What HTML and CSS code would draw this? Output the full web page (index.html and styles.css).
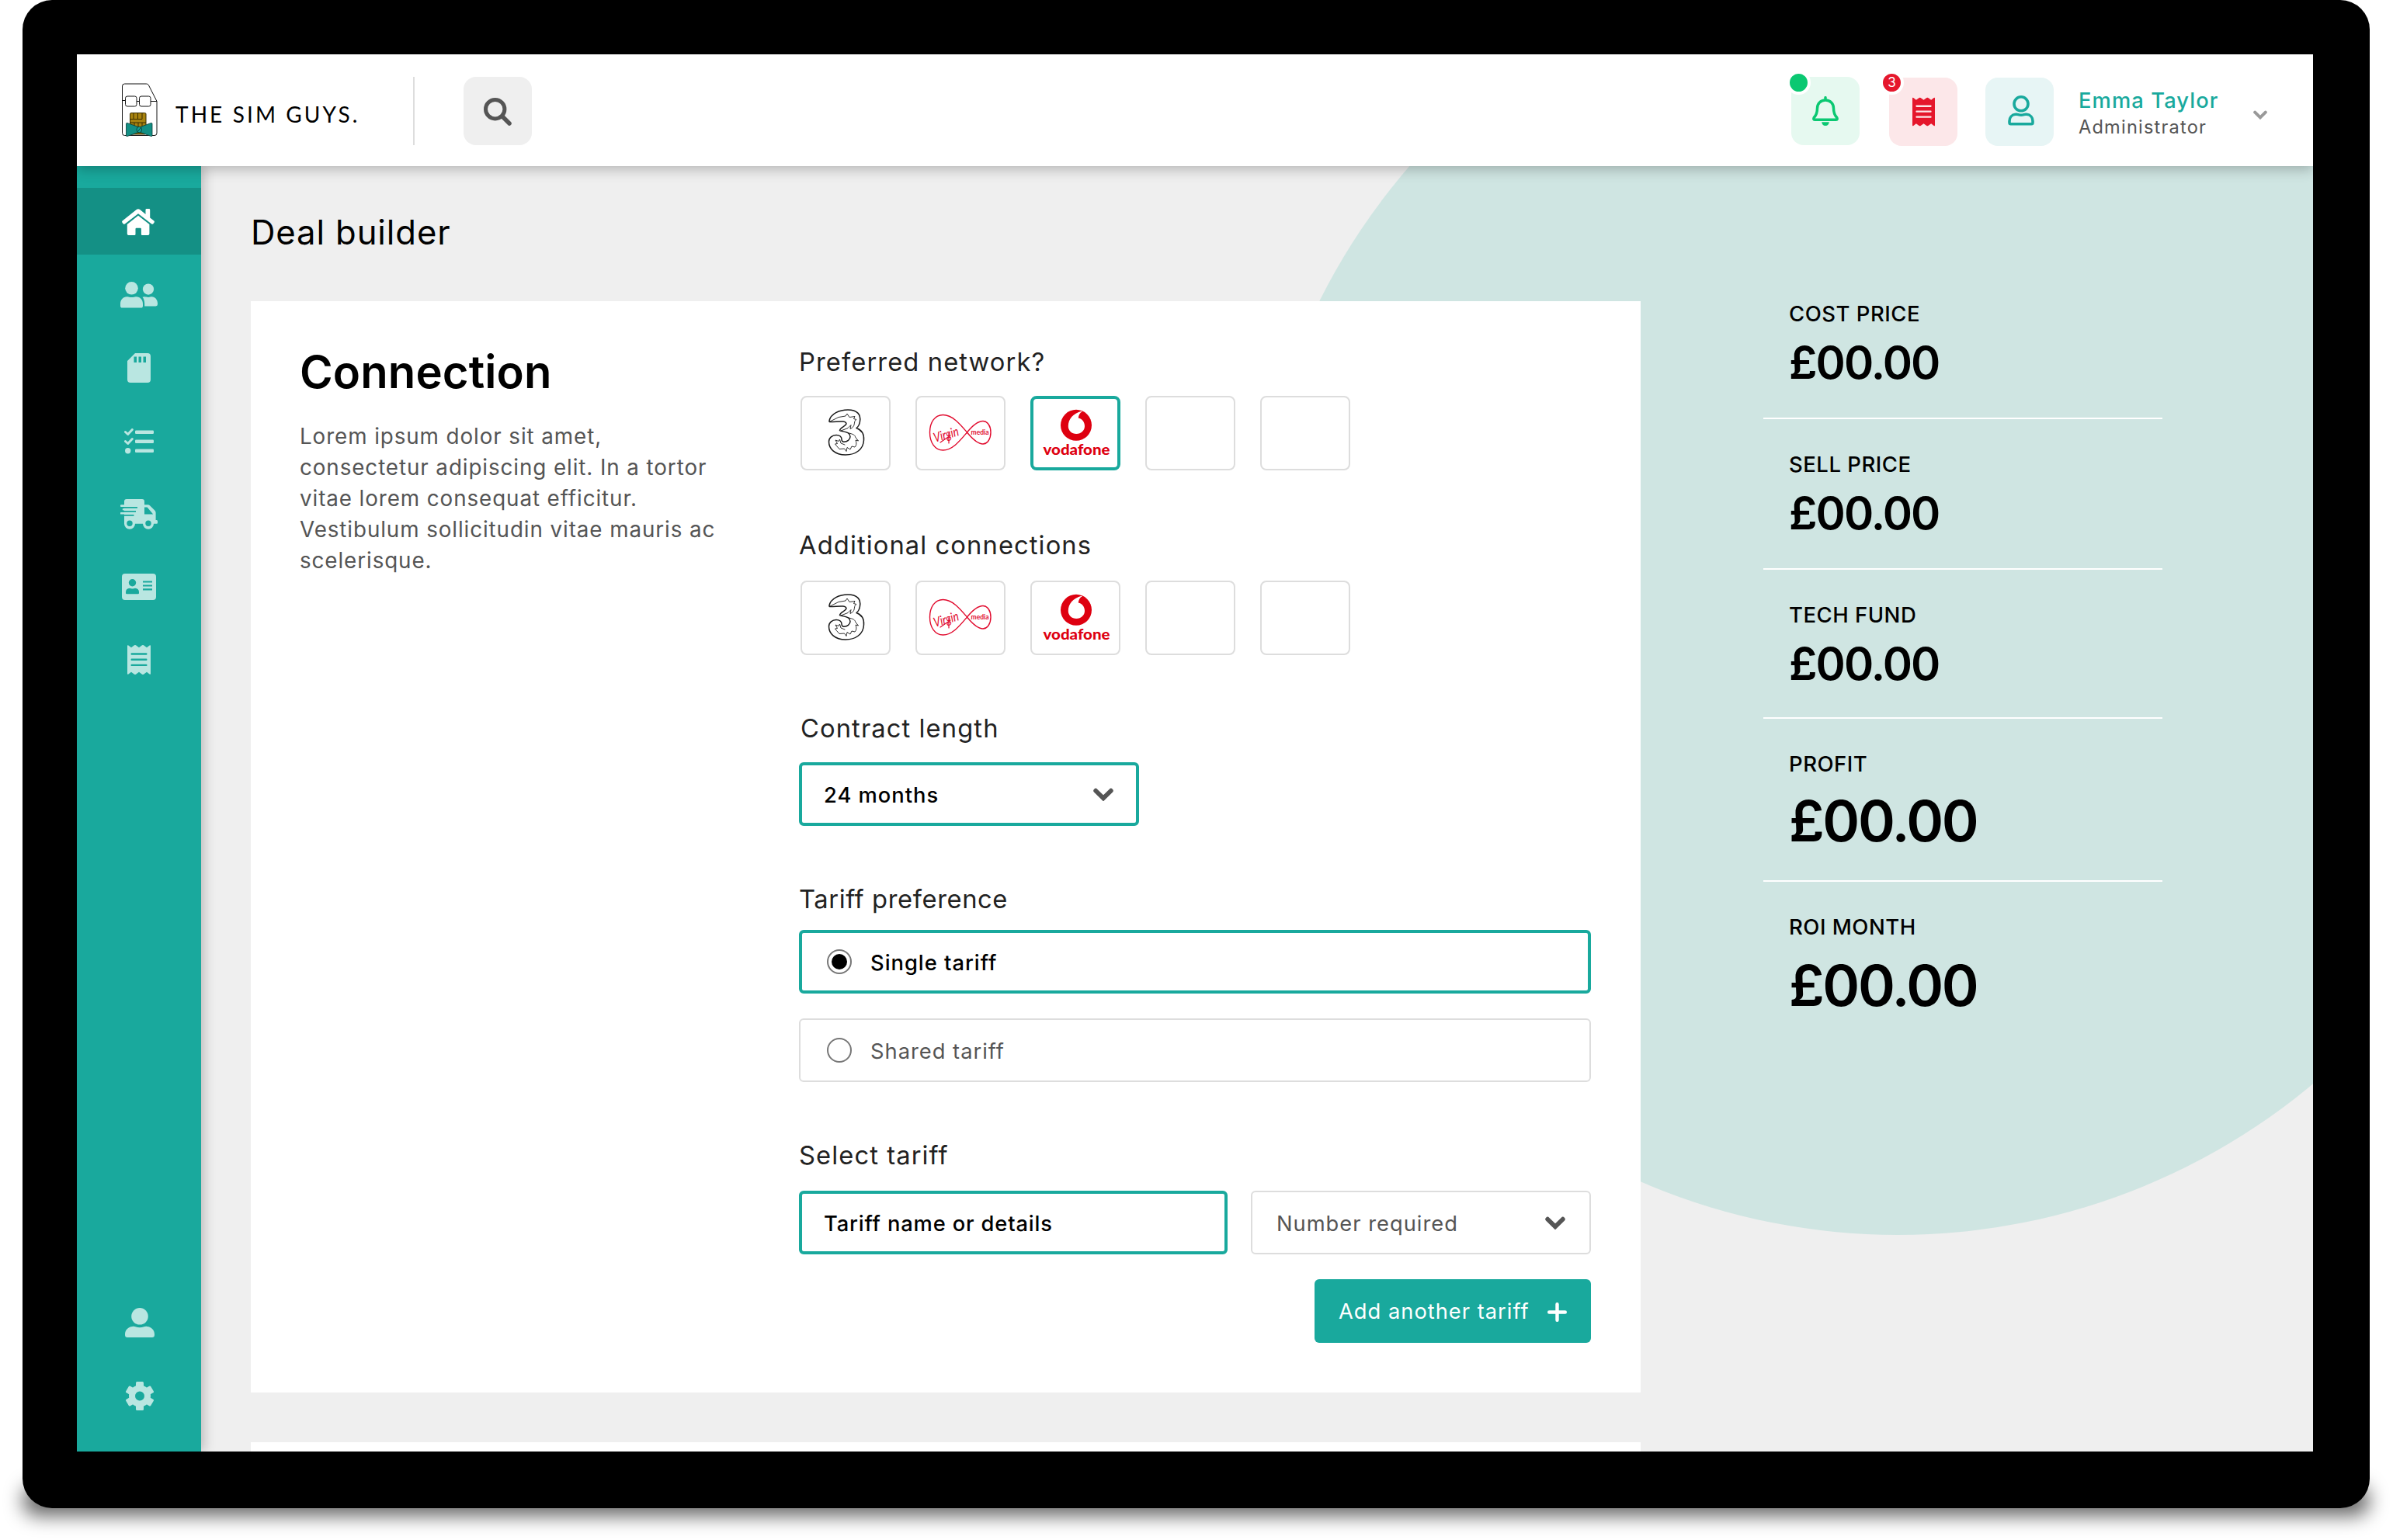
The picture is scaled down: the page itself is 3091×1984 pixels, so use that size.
FILE: index.html
```html
<!DOCTYPE html>
<html lang="en">
<head>
<meta charset="UTF-8">
<title>The Sim Guys - Deal builder</title>
<link rel="stylesheet" href="styles.css">
</head>

<body>
    <!-- shared icons -->
    <svg class="sprite" width="0" height="0">
        <symbol id="icon-home" viewBox="0 0 42 34">
            <path d="M30.5 1.2Q30.5 0 31.7 0H35Q36.2 0 36.2 1.2V11.5L41.3 15.6Q42.4 16.6 41.5 17.8L40.4 19.2Q39.4 20.3 38.2 19.4L21 6.2 3.8 19.4Q2.6 20.3 1.6 19.2L.5 17.8Q-.4 16.6.7 15.6L18.8 1.1Q21 -.7 23.2 1.1L30.5 7Z"/>
            <path d="M21 8.7L35.4 20V32.2Q35.4 34 33.6 34H26Q24.9 34 24.9 32.8V26Q24.9 24.8 23.8 24.8H18.6Q17.5 24.8 17.5 26V32.8Q17.5 34 16.3 34H8.6Q6.8 34 6.8 32.2V20Z"/>
        </symbol>
        <symbol id="icon-users" viewBox="0 0 48 34">
            <circle cx="14.5" cy="8.3" r="8.3"/>
            <path d="M8.5 19.2C11 19 11.5 20 14.5 20S18 19 20.5 19.2C25.5 19.4 29 23 29 28.500V31Q29 33.600 26.400 33.600H2.600Q0 33.600 0 31V28.500C0 23 3.500 19.400 8.500 19.200Z"/>
            <circle cx="36" cy="9.600" r="7.100"/>
            <path d="M28.500 19.800C30.500 18.800 32.500 19.200 33.500 19.600 35 20.200 37 20.200 38.500 19.600 43.500 18 48 22.500 48 28V29Q48 31.400 45.600 31.400H31.200C31.400 27 31 22.500 28.500 19.800Z"/>
        </symbol>
        <symbol id="icon-sd" viewBox="0 0 30 38">
            <path fill-rule="evenodd" d="M10 0H26Q30 0 30 4V34Q30 38 26 38H4Q0 38 0 34V10ZM8.500 4.500V12H12V4.500ZM14.500 4.500V12H18V4.500ZM20.500 4.500V12H24V4.500Z"/>
        </symbol>
        <symbol id="icon-tasks" viewBox="0 0 38 33">
            <path d="M1.500 4.500L4.700 7.500 10.300 1.500M1.500 16.500L4.700 19.500 10.300 13.500" fill="none" stroke="currentColor" stroke-width="3" stroke-linecap="round" stroke-linejoin="round"/>
            <circle cx="4.700" cy="28.700" r="3.700"/>
            <rect x="14" y="2.500" width="24" height="4.600" rx="1.300"/>
            <rect x="14" y="14.500" width="24" height="4.600" rx="1.300"/>
            <rect x="14" y="26.500" width="24" height="4.600" rx="1.300"/>
        </symbol>
        <symbol id="icon-truck" viewBox="0 0 48 39">
            <path fill-rule="evenodd" d="M8 0H28Q31 0 31 3V7.200H35.500Q37 7.200 38.200 8.400L44 14.200Q45.600 15.600 45.600 17.500V27H46.800Q48 27 48 28.500V30.500Q48 31.800 46.800 31.800H43A7 7 0 1 1 29 31.800H19A7 7 0 1 1 5 31.800V3Q5 0 8 0ZM31 10.500V19.500H42.200L34.600 10.500ZM12 27.600A3.700 3.700 0 1 0 12 35A3.700 3.700 0 1 0 12 27.600ZM36 27.600A3.700 3.700 0 1 0 36 35A3.700 3.700 0 1 0 36 27.600Z"/>
            <path class="truck-gap" d="M5 10.800H22M4 15.800H20M5 20.800H17.500" fill="none" stroke-width="1.800"/>
            <path d="M1 8.600H12M4 13.300H14M1 18.200H12" fill="none" stroke="currentColor" stroke-width="2.600" stroke-linecap="round"/>
        </symbol>
        <symbol id="icon-id" viewBox="0 0 44 34">
            <path fill-rule="evenodd" d="M4 0H40Q44 0 44 4V30Q44 34 40 34H4Q0 34 0 30V4Q0 0 4 0ZM13.500 7A4.700 4.700 0 1 0 13.500 16.400A4.700 4.700 0 1 0 13.500 7ZM10 18.800Q5 19.200 5 24V25Q5 26.200 6.200 26.200H20.800Q22 26.200 22 25V24Q22 19.200 17 18.800Q13.500 20.200 10 18.800ZM27 9.500V11.600H39V9.500ZM27 14.400V16.500H39V14.400ZM27 19.300V21.400H39V19.300Z"/>
        </symbol>
        <symbol id="icon-receipt" viewBox="0 0 30 38">
            <path fill-rule="evenodd" d="M0 1.200Q0 -.3 1.400 .5L5 3.300 9 .3Q10 -.3 11 .3L15 3.300 19 .3Q20 -.3 21 .3L25 3.300 28.600 .5Q30 -.3 30 1.200V36.800Q30 38.300 28.600 37.500L25 34.700 21 37.700Q20 38.300 19 37.700L15 34.700 11 37.700Q10 38.300 9 37.700L5 34.700 1.400 37.500Q0 38.300 0 36.800ZM5.500 10.300Q4.500 10.300 4.500 11.500T5.500 12.700H24.500Q25.500 12.700 25.500 11.500T24.500 10.300ZM5.500 17.500Q4.500 17.500 4.500 18.700T5.500 19.900H24.500Q25.500 19.900 25.500 18.700T24.500 17.500ZM5.500 24.700Q4.500 24.700 4.500 25.900T5.500 27.100H24.500Q25.500 27.100 25.500 25.900T24.500 24.700Z"/>
        </symbol>
        <symbol id="icon-user" viewBox="0 0 38 38">
            <circle cx="19" cy="10.800" r="10.800"/>
            <path d="M9.500 23.900C13 23.400 14.500 25.200 19 25.200S25 23.400 28.500 23.900C34 24.300 38 28.500 38 34V34.800Q38 38 34.800 38H3.200Q0 38 0 34.800V34C0 28.500 4 24.300 9.500 23.900Z"/>
        </symbol>
        <symbol id="icon-cog" viewBox="0 0 36 37">
            <circle cx="18" cy="18.500" r="10" fill="none" stroke="currentColor" stroke-width="8"/>
            <g>
                <rect x="13" y="0" width="10" height="9" rx="1.500"/>
                <rect x="13" y="0" width="10" height="9" rx="1.500" transform="rotate(60 18 18.500)"/>
                <rect x="13" y="0" width="10" height="9" rx="1.500" transform="rotate(120 18 18.500)"/>
                <rect x="13" y="0" width="10" height="9" rx="1.500" transform="rotate(180 18 18.500)"/>
                <rect x="13" y="0" width="10" height="9" rx="1.500" transform="rotate(240 18 18.500)"/>
                <rect x="13" y="0" width="10" height="9" rx="1.500" transform="rotate(300 18 18.500)"/>
            </g>
        </symbol>
        <symbol id="icon-chevron" viewBox="0 0 26 17">
            <path d="M3.200 3.700L13 13.300 22.800 3.700" fill="none" stroke="currentColor" stroke-width="5.800" stroke-linecap="round"/>
        </symbol>

        <!-- network logos, drawn on the 116x96 tile -->
        <symbol id="logo-three" viewBox="0 0 116 96">
            <g fill="none" stroke="#1a1a1a" stroke-linecap="round" stroke-linejoin="round">
                <path stroke-width="1.500" d="M37 32C39 23 50 18 61 18C73 18 78 24 76.500 33C76 37 74.500 39.500 72 41.500C79 44 82 50 81.500 57C81 69 71 76 58 76C44 76 36.500 68 36.500 59C36.500 54 41 50.500 46 50.500C50.500 50.500 53 53 53 56C53 57.500 54 59.500 56 59.300C60 59 64 56.500 64 52.500C64 46.500 57 46.800 50.500 44.500C51 40.500 58 39.500 59 36C58.500 31 48 33.500 38.500 33.500Q36.500 33.500 37 32Z"/>
                <path stroke-width=".9" d="M38 33L49 27.500 58 26 60 23 63 27.500 70 26.500 68.500 29.500 72 30.500C68 32 71 38 66.500 41L64 42.500 65 37.500 61 41.500 52 45M62 48C68 49 70.500 51 70.500 53L74.500 58 71 57C72.500 61 72 64 70 66L66 65 64 69 60 66.500 59 71.500 56.500 68 50 68.500 46.500 64.500 44.500 62 47.500 61.500 45 57 49 58.500 50.500 56 52 61 57 63"/>
            </g>
        </symbol>
        <symbol id="logo-virgin" viewBox="0 0 116 96">
            <path d="M66.500 47C58 57 48 70 35.500 70C25 70 18.500 60 18.500 47S25 24.500 35.500 24.500C48 24.500 58 37 66.500 47C73 55 80 62 87 62C93 62 97 55 97 47S93 32.500 87 32.500C80 32.500 73 39 66.500 47Z" fill="none" stroke="#e10a2d" stroke-width="1.400"/>
            <path d="M32 60L45 51M43 48V61" fill="none" stroke="#e10a2d" stroke-width="1.200" stroke-linecap="round"/>
        </symbol>
        <symbol id="logo-vodafone" viewBox="0 0 116 96">
            <circle cx="59" cy="37.800" r="20" fill="#de0010"/>
            <path d="M66 19.800C55 22.500 48.800 30 48.800 39C48.800 45 53.500 49 59.300 49C65.500 49 70 44.500 70 39C70 33.500 66.500 29.500 61.800 28.500C62 25 64 21.500 66.800 20.200Z" fill="#fff"/>
        </symbol>
    </svg>

    <div class="device">
        <div class="screen">
            <header class="topbar">
                <div class="brand">
                    <svg width="46" height="70" viewBox="0 0 46 70">
                        <g fill="none" stroke="#111" stroke-width="1">
                            <path d="M3.500 1H31.500Q33.500 1 34.300 2.500L45 23.500V64.500Q45 67.500 42 67.500H3.500Q.5 67.500 .5 64.500V4Q.5 1 3.500 1Z"/>
                            <path d="M.5 22.500H4.500M19 23.500H22.500M37 23.500H45"/>
                            <rect x="4.500" y="17" width="14.500" height="13" rx="2.500"/>
                            <rect x="22.500" y="17" width="14.500" height="13" rx="2.500"/>
                        </g>
                        <rect x="10.500" y="38.500" width="20.500" height="27.500" rx="1.500" fill="#a8830f" stroke="#3a2d00"/>
                        <path d="M10.500 46.500H26M10.500 51H31M15 39V46M20.500 39V46M26 39V46.500M16 51V57M21 51V57M26 51V57M14 64H28" fill="none" stroke="#3a2d00"/>
                        <path d="M5.500 52.500Q5.500 51 7 51.500L22.500 57 37.500 51.500Q39 51 39 52.500V67.500Q39 69 37.500 68.500L22.500 63 7 68.500Q5.500 69 5.500 67.500Z" fill="#138f84" stroke="#0a3b37" stroke-width=".8"/>
                        <ellipse cx="22.300" cy="60" rx="3.300" ry="3.800" fill="#15a094" stroke="#062e2b" stroke-width=".8"/>
                        <path d="M20.500 62.500L24.300 57.500" stroke="#062e2b" stroke-width=".8"/>
                    </svg>
                    <span class="brand-name">THE SIM GUYS.</span>
                </div>
                <div class="divider"></div>
                <button class="search-button" type="button">
                    <svg width="36" height="36" viewBox="0 0 36 36">
                        <circle cx="14.700" cy="14.700" r="12.200" fill="none" stroke="#555" stroke-width="5"/>
                        <path d="M24.500 24.500L33 33" stroke="#555" stroke-width="5.500" stroke-linecap="round"/>
                    </svg>
                </button>

                <div class="actions">
                    <div class="action action-alerts">
                        <svg width="34" height="38" viewBox="0 0 34 38">
                            <path d="M17 1.700V5M17 5C10.500 5 6.500 9.800 6.500 15.500C6.500 22 5 24.500 2.300 27.500Q1 30.200 3.200 30.200H30.800Q33 30.200 31.700 27.500C29 24.500 27.500 22 27.500 15.500C27.500 9.800 23.500 5 17 5Z" fill="none" stroke="#0bc872" stroke-width="3.500" stroke-linecap="round" stroke-linejoin="round"/>
                            <path d="M12.200 33.300H21.800Q21.300 38 17 38T12.200 33.300Z" fill="#0bc872"/>
                        </svg>
                        <span class="badge badge-green"></span>
                    </div>
                    <div class="action action-orders">
                        <svg width="29" height="38"><use href="#icon-receipt"/></svg>
                        <span class="badge badge-red">3</span>
                    </div>
                    <div class="action action-account">
                        <svg width="34" height="39" viewBox="0 0 34 39" stroke="#19a99d" stroke-width="3.600">
                            <circle cx="17" cy="10.800" r="9"/>
                            <path d="M10 24.300C12.500 23.800 13.500 25.300 17 25.300S21.500 23.800 24 24.300C29 24.700 32 28.500 32 33V35Q32 36.700 30.300 36.700H3.700Q2 36.700 2 35V33C2 28.500 5 24.700 10 24.300Z" stroke-linejoin="round"/>
                        </svg>
                    </div>
                    <div class="account">
                        <div class="account-name">Emma Taylor</div>
                        <div class="account-role">Administrator</div>
                    </div>
                    <svg class="account-toggle" width="18" height="12"><use href="#icon-chevron"/></svg>
                </div>
            </header>

            <div class="layout">
                <nav class="sidebar">
                    <a class="nav-item active"><svg width="42" height="34"><use href="#icon-home"/></svg></a>
                    <a class="nav-item"><svg width="48" height="34"><use href="#icon-users"/></svg></a>
                    <a class="nav-item"><svg width="30" height="38"><use href="#icon-sd"/></svg></a>
                    <a class="nav-item"><svg width="38" height="33"><use href="#icon-tasks"/></svg></a>
                    <a class="nav-item"><svg width="48" height="39"><use href="#icon-truck"/></svg></a>
                    <a class="nav-item"><svg width="44" height="34"><use href="#icon-id"/></svg></a>
                    <a class="nav-item"><svg width="30" height="38"><use href="#icon-receipt"/></svg></a>
                    <a class="nav-item nav-bottom"><svg width="38" height="38"><use href="#icon-user"/></svg></a>
                    <a class="nav-item nav-settings"><svg width="36" height="37"><use href="#icon-cog"/></svg></a>
                </nav>

                <main class="main">
                    <h1>Deal builder</h1>
                    <div class="columns">
                        <div class="cards">
                            <section class="card">
                                <div class="intro">
                                    <h2>Connection</h2>
                                    <p>Lorem ipsum dolor sit amet,<br>
                                    consectetur adipiscing elit. In a tortor<br>
                                    vitae lorem consequat efficitur.<br>
                                    Vestibulum sollicitudin vitae mauris ac<br>
                                    scelerisque.</p>
                                </div>

                                <form class="fields">
                                    <div class="group preferred">
                                        <h3>Preferred network?</h3>
                                        <div class="networks">
                                            <div class="network"><svg width="116" height="96"><use href="#logo-three"/></svg></div>
                                            <div class="network">
                                                <svg width="116" height="96">
                                                    <use href="#logo-virgin"/>
                                                    <text class="virgin-script" x="23" y="56" textLength="33" lengthAdjust="spacingAndGlyphs" transform="rotate(-16 38 50)">Virgin</text>
                                                    <text class="virgin-media" x="71.500" y="49.500" textLength="23" lengthAdjust="spacingAndGlyphs">media</text>
                                                </svg>
                                            </div>
                                            <div class="network selected">
                                                <svg width="116" height="96">
                                                    <use href="#logo-vodafone"/>
                                                    <text class="vodafone-name" x="16.500" y="75.500" textLength="86" lengthAdjust="spacingAndGlyphs">vodafone</text>
                                                </svg>
                                            </div>
                                            <div class="network"></div>
                                            <div class="network"></div>
                                        </div>
                                    </div>

                                    <div class="group additional">
                                        <h3>Additional connections</h3>
                                        <div class="networks">
                                            <div class="network"><svg width="116" height="96"><use href="#logo-three"/></svg></div>
                                            <div class="network">
                                                <svg width="116" height="96">
                                                    <use href="#logo-virgin"/>
                                                    <text class="virgin-script" x="23" y="56" textLength="33" lengthAdjust="spacingAndGlyphs" transform="rotate(-16 38 50)">Virgin</text>
                                                    <text class="virgin-media" x="71.500" y="49.500" textLength="23" lengthAdjust="spacingAndGlyphs">media</text>
                                                </svg>
                                            </div>
                                            <div class="network">
                                                <svg width="116" height="96">
                                                    <use href="#logo-vodafone"/>
                                                    <text class="vodafone-name" x="16.500" y="75.500" textLength="86" lengthAdjust="spacingAndGlyphs">vodafone</text>
                                                </svg>
                                            </div>
                                            <div class="network"></div>
                                            <div class="network"></div>
                                        </div>
                                    </div>

                                    <div class="group contract">
                                        <h3>Contract length</h3>
                                        <div class="field select selected">
                                            <span>24 months</span>
                                            <svg width="26" height="17"><use href="#icon-chevron"/></svg>
                                        </div>
                                    </div>

                                    <div class="group preference">
                                        <h3>Tariff preference</h3>
                                        <div class="field option selected">
                                            <i class="radio checked"></i>
                                            <span>Single tariff</span>
                                        </div>
                                        <div class="field option">
                                            <i class="radio"></i>
                                            <span>Shared tariff</span>
                                        </div>
                                    </div>

                                    <div class="group tariff">
                                        <h3>Select tariff</h3>
                                        <div class="field-row">
                                            <div class="field tariff-name selected"><span>Tariff name or details</span></div>
                                            <div class="field select">
                                                <span>Number required</span>
                                                <svg width="26" height="17"><use href="#icon-chevron"/></svg>
                                            </div>
                                        </div>
                                        <button class="add-button" type="button">
                                            <span>Add another tariff</span>
                                            <svg width="25" height="25" viewBox="0 0 25 25"><path d="M12.500 2.200V22.800M2.200 12.500H22.800" stroke="#fff" stroke-width="4.400" stroke-linecap="round"/></svg>
                                        </button>
                                    </div>
                                </form>
                            </section>
                            <section class="card next-card"></section>
                        </div>

                        <aside class="summary">
                            <div class="summary-item">
                                <div class="summary-label">COST PRICE</div>
                                <div class="summary-value">£00.00</div>
                            </div>
                            <div class="summary-item">
                                <div class="summary-label">SELL PRICE</div>
                                <div class="summary-value">£00.00</div>
                            </div>
                            <div class="summary-item tech">
                                <div class="summary-label">TECH FUND</div>
                                <div class="summary-value">£00.00</div>
                            </div>
                            <div class="summary-item large">
                                <div class="summary-label">PROFIT</div>
                                <div class="summary-value">£00.00</div>
                            </div>
                            <div class="summary-item large">
                                <div class="summary-label">ROI MONTH</div>
                                <div class="summary-value">£00.00</div>
                            </div>
                        </aside>
                    </div>
                </main>
            </div>
        </div>
    </div>
</body>
</html>
```
FILE: styles.css
```css
* {
    box-sizing: border-box;
}

body {
    margin: 0;
    height: 1984px;
    background: #fff;
    font-family: Inter, "Open Sans", sans-serif;
    overflow: hidden;
}

svg {
    display: block;
    flex-shrink: 0;
    fill: currentColor;
}

h1, h2, h3, p {
    margin: 0;
    white-space: nowrap;
}

button {
    border: none;
    padding: 0;
    font-family: inherit;
}

.sprite {
    position: absolute;
}

/* Tablet frame */
.device {
    position: relative;
    width: 3023px;
    height: 1943px;
    margin-left: 29px;
    padding: 70px 73px 73px 70px;
    background: #000;
    border-radius: 38px;
}

.device::before {
    content: "";
    position: absolute;
    z-index: -1;
    left: 0;
    right: 0;
    bottom: -10px;
    height: 40px;
    border-radius: 20px;
    background: rgba(0, 0, 0, 0.6);
    filter: blur(12px);
}

.screen {
    width: 2880px;
    height: 1800px;
    overflow: hidden;
    background: #efefef;
}

/* Top bar */
.topbar {
    position: relative;
    z-index: 3;
    display: flex;
    align-items: center;
    height: 144px;
    padding: 0 59px 0 58px;
    background: #fff;
    box-shadow: 0 4px 16px rgba(0, 0, 0, 0.25);
}

.brand {
    display: flex;
    align-items: center;
    width: 375px;
}

.brand-name {
    margin: 9px 0 0 23px;
    font-family: Lato, sans-serif;
    font-size: 28px;
    line-height: 34px;
    letter-spacing: 3.1px;
    white-space: nowrap;
}

.divider {
    width: 2px;
    height: 88px;
    margin: 2px 63px 0 0;
    background: #ddd;
}

.search-button {
    display: flex;
    align-items: center;
    justify-content: center;
    width: 88px;
    height: 88px;
    margin-top: 2px;
    padding-top: 2px;
    border-radius: 16px;
    background: #efefef;
}

.actions {
    display: flex;
    align-items: flex-start;
    height: 144px;
    margin-left: auto;
}

.action {
    position: relative;
    display: flex;
    align-items: center;
    justify-content: center;
    width: 88px;
    height: 88px;
    margin-top: 30px;
    border-radius: 16px;
}

.action-alerts {
    margin-top: 29px;
    margin-right: 38px;
    background: #e6f9f0;
}

.action-orders {
    margin-right: 36px;
    background: #fce7e9;
    color: #e5172c;
}

.action-account {
    margin-right: 32px;
    padding: 0 0 4px 4px;
    background: #e7f5f5;
}

.action-account svg {
    fill: none;
}

.badge {
    position: absolute;
    display: flex;
    align-items: center;
    justify-content: center;
    width: 31px;
    height: 31px;
    border: 4px solid #fff;
    border-radius: 50%;
    color: #fff;
    font-size: 17px;
    line-height: 1;
}

.badge-green {
    top: -8px;
    left: -6px;
    background: #0bc872;
}

.badge-red {
    top: -9px;
    left: -12px;
    background: #e5172c;
}

.account {
    width: 225px;
    padding-top: 42px;
    white-space: nowrap;
}

.account-name {
    font-size: 27.3px;
    line-height: 35px;
    font-weight: 500;
    letter-spacing: 1.1px;
    color: #19a99d;
}

.account-role {
    font-size: 23.6px;
    line-height: 34px;
    letter-spacing: 1.2px;
    color: #555;
}

.account-toggle {
    margin-top: 72px;
    color: #999;
}

/* Sidebar */
.layout {
    display: flex;
    height: 1656px;
}

.sidebar {
    position: relative;
    z-index: 2;
    display: flex;
    flex-direction: column;
    gap: 8px;
    width: 160px;
    padding: 28px 0 29px;
    background: #19a99d;
    box-shadow: 4px 0 14px rgba(0, 0, 0, 0.22);
}

.nav-item {
    display: flex;
    align-items: center;
    justify-content: center;
    height: 86px;
    padding-top: 2px;
    color: #b9e6e1;
}

.nav-item.active {
    padding-right: 2px;
    background: #149085;
    color: #fff;
}

.nav-bottom {
    margin-top: auto;
}

.nav-bottom,
.nav-settings {
    padding: 0 0 0 2px;
}

.truck-gap {
    stroke: #19a99d;
}

/* Main area */
.main {
    position: relative;
    z-index: 0;
    flex: 1;
    padding: 61px 0 0 64px;
    overflow: hidden;
}

.main::before {
    content: "";
    position: absolute;
    z-index: -1;
    left: 1353px;
    top: -287px;
    width: 1664px;
    height: 1664px;
    border-radius: 50%;
    background: #cfe5e2;
}

h1 {
    margin-bottom: 63px;
    font-size: 43.6px;
    line-height: 50px;
    font-weight: 400;
    letter-spacing: 0.9px;
}

.columns {
    display: flex;
    align-items: flex-start;
}

.cards {
    display: flex;
    flex-direction: column;
    gap: 64px;
    width: 1790px;
}

.card {
    display: flex;
    height: 1406px;
    padding: 56px 64px 0 63px;
    background: #fff;
}

.next-card {
    height: 100px;
}

.intro {
    width: 643px;
}

.intro h2 {
    margin-bottom: 28px;
    font-size: 58px;
    line-height: 70px;
    font-weight: 600;
    letter-spacing: 0.1px;
}

.intro p {
    font-size: 27.8px;
    line-height: 40px;
    letter-spacing: 0.9px;
    color: #555;
}

/* Form */
.fields {
    width: 1020px;
    padding-top: 2px;
}

.group {
    margin-bottom: 74px;
}

.preferred {
    margin-bottom: 76px;
}

.group h3 {
    margin-bottom: 24px;
    font-size: 32.7px;
    line-height: 40px;
    font-weight: 400;
    letter-spacing: 1.1px;
    color: #222;
}

.additional h3,
.tariff h3 {
    margin-bottom: 26px;
}

.contract h3 {
    padding-left: 2px;
}

.preference h3 {
    margin-bottom: 20px;
    letter-spacing: 0.6px;
}

.networks {
    display: flex;
    gap: 32px;
    padding-left: 2px;
}

.network {
    display: flex;
    align-items: center;
    justify-content: center;
    width: 116px;
    height: 96px;
    border: 2px solid #ddd;
    border-radius: 8px;
}

.network.selected {
    border: 4px solid #19a99d;
}

.virgin-script {
    font-family: Lato, sans-serif;
    font-size: 17px;
    font-style: italic;
    fill: #e10a2d;
}

.virgin-media {
    font-family: Lato, sans-serif;
    font-size: 9px;
    font-weight: 700;
    fill: #e10a2d;
}

.vodafone-name {
    font-family: Lato, sans-serif;
    font-size: 19px;
    font-weight: 900;
    fill: #de0010;
}

.field {
    display: flex;
    align-items: center;
    height: 82px;
    padding: 3px 31px 0 31px;
    border: 2px solid #ddd;
    border-radius: 6px;
    font-size: 27.3px;
    line-height: 40px;
    letter-spacing: 1px;
    color: #555;
    white-space: nowrap;
}

.field.selected {
    padding: 3px 29px 0 28px;
    border: 4px solid #19a99d;
}

.field.selected span {
    font-weight: 500;
    color: #000;
}

.select {
    justify-content: space-between;
    width: 438px;
}

.select svg {
    margin-top: -3px;
}

.option,
.option.selected {
    padding-top: 0;
}

.option {
    padding-left: 34px;
}

.option.selected {
    padding-left: 32px;
}

.option + .option {
    margin-top: 32px;
}

.option span {
    padding-top: 3px;
}

.radio {
    width: 32px;
    height: 32px;
    margin-right: 24px;
    padding: 4px;
    border: 2px solid #777;
    border-radius: 50%;
}

.radio.checked {
    background: #000 content-box;
}

.field-row {
    display: flex;
    gap: 30px;
    margin-bottom: 32px;
}

.tariff-name {
    width: 552px;
    letter-spacing: 0.85px;
}

.add-button {
    display: flex;
    align-items: center;
    justify-content: space-between;
    width: 356px;
    height: 82px;
    margin-left: auto;
    padding: 2px 31px 0 31px;
    border-radius: 6px;
    background: #19a99d;
    font-size: 27.3px;
    line-height: 40px;
    letter-spacing: 1px;
    color: #fff;
    white-space: nowrap;
}

/* Deal totals */
.summary {
    width: 514px;
    margin: -42px 0 0 158px;
}

.summary-item {
    padding: 41px 0 36px 33px;
    border-bottom: 2px solid #fff;
}

.summary-item.tech {
    padding-bottom: 34px;
}

.summary-item.large {
    padding-bottom: 31px;
}

.summary-item:last-child {
    border-bottom: none;
}

.summary-label {
    margin-bottom: 11px;
    font-size: 27.5px;
    line-height: 34px;
    font-weight: 500;
    letter-spacing: 0.5px;
}

.summary-value {
    font-size: 58px;
    line-height: 70px;
    font-weight: 600;
    letter-spacing: -1.9px;
}

.large .summary-value {
    margin-top: 12px;
    font-size: 72.7px;
    line-height: 90px;
    letter-spacing: -2.4px;
}

.summary-item:last-child .summary-value {
    margin-top: 14px;
}
```
